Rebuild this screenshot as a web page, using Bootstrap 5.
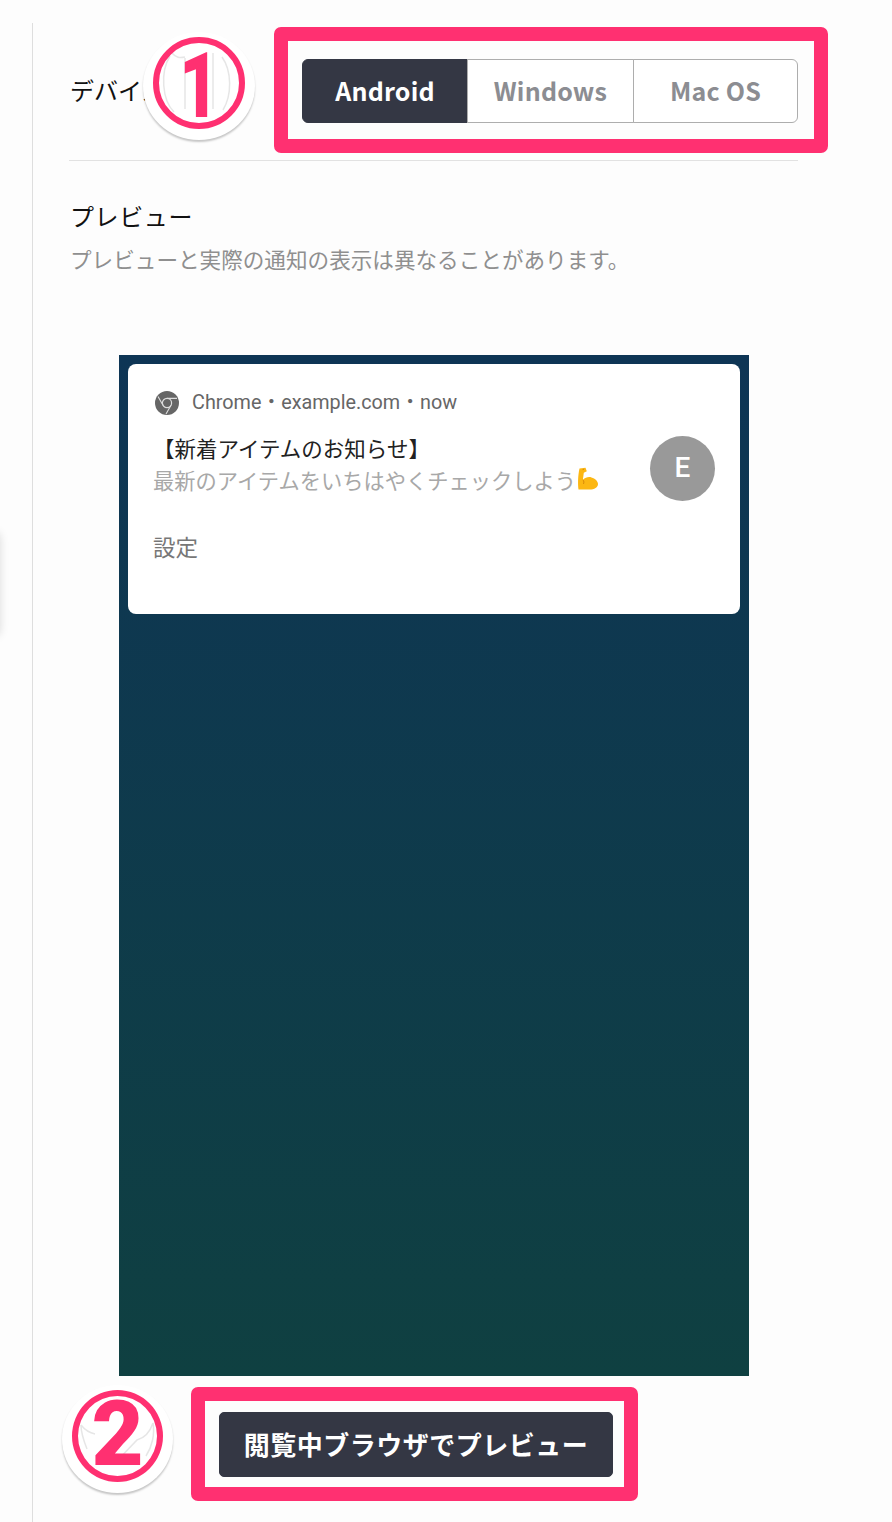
<!DOCTYPE html>
<html lang="ja">
<head>
<meta charset="utf-8">
<title>プレビュー</title>
<link rel="stylesheet" href="https://cdn.jsdelivr.net/npm/bootstrap@5.3.0/dist/css/bootstrap.min.css">
<style>
html,body{height:1522px;overflow:hidden;background:#fdfdfd;}
body{position:relative;font-family:"Noto Sans CJK JP","Liberation Sans",sans-serif;color:#111;}
.side-peek{position:absolute;left:-40px;top:532px;width:40px;height:104px;border-radius:6px;box-shadow:0 0 10px rgba(0,0,0,.14);background:#fff;}
.shell{margin:23px 0 0 32px;height:1499px;border-left:1px solid #dedede;padding-left:36px;width:766px;}
.device-row{height:138px;padding-top:36px;border-bottom:1px solid #e2e2e2;}
.field-name{font-size:24px;margin:19px 0 0 1px;line-height:1;}
.os-group{width:496px;height:64px;}
.os-group .btn{flex:none;width:166px;font-size:25px;font-weight:700;line-height:1;color:#8c8d92;border-color:#adadad;background:#fff;padding:0 0 2px;letter-spacing:.2px;display:flex;align-items:center;justify-content:center;}
.os-group .btn:nth-child(2){width:167px;}
.os-group .btn:nth-child(3){width:165px;}
.os-group .btn.on{background:#343744;border-color:#343744;color:#fff;}
.preview-title{font-size:24px;line-height:1;margin:43px 0 0 1px;letter-spacing:.6px;font-weight:400;}
.preview-note{font-size:21.6px;line-height:1;margin:20px 0 0 1px;color:#8f8f8f;}
.phone{margin:85.4px 0 0 50px;width:630px;height:1021px;padding:9px;background:linear-gradient(180deg,#0e3555,#0f4041);}
.note-card{height:250px;border-radius:8px;background:#fff;padding:27px 25px 0 25px;}
.note-head{font-family:Roboto,"Noto Sans CJK JP",sans-serif;font-size:19.8px;line-height:24px;color:#666;gap:13px;margin-left:2px;}
.note-body{margin-top:18px;}
.note-title{font-size:21.5px;line-height:29px;color:#222;}
.note-text{font-size:21.25px;line-height:29px;color:#a8a8a8;margin-top:3px;white-space:nowrap;}
.note-avatar{width:65px;height:65px;border-radius:50%;background:#999;color:#fff;font-family:Roboto,sans-serif;font-size:28px;font-weight:500;margin:3px 0 0 0;flex:none;}
.note-action{font-size:22.5px;line-height:1;color:#777;margin-top:34px;}
.pv-btn-row{margin:36px 0 0 150px;}
.pv-btn{width:394px;height:65px;background:#343744;border-color:#343744;color:#fff;font-size:26px;font-weight:700;letter-spacing:.5px;padding:0;border-radius:5px;line-height:1;}
.pv-btn:hover{background:#343744;color:#fff;}
.frame-mark{position:absolute;border:14px solid #ff3071;border-radius:7px;pointer-events:none;}
.frame-a{left:274px;top:27px;width:554px;height:126px;}
.frame-b{left:191px;top:1387px;width:447px;height:114px;}
.num-mark{position:absolute;border-radius:50%;background:#fff;box-shadow:0 2px 2px rgba(0,0,0,.22);width:112px;height:108px;}
.num-a{left:143px;top:32px;}
.num-b{left:62px;top:1385px;height:108px;width:111px;}
.num-ring{position:absolute;inset:5px 10px 11px 10px;border:6.5px solid #ff3071;border-radius:50%;}
.num-ghost{position:absolute;inset:0;width:100%;height:100%;}
.num-digit{position:absolute;inset:0;color:#ff3071;font-family:Roboto,sans-serif;font-weight:900;font-size:90px;line-height:1;}
.num-a .num-digit{padding:2px 0 0 0;}
.num-a .num-digit span{display:block;transform:scaleX(.76);}
.num-b .num-digit{padding:0 0 8px 0;}
</style>
</head>
<body>
<div class="side-peek"></div>
<main class="shell">
  <section class="device-row d-flex justify-content-between align-items-start">
    <div class="field-name">デバイス</div>
    <div class="btn-group os-group" role="group">
      <button type="button" class="btn on">Android</button>
      <button type="button" class="btn">Windows</button>
      <button type="button" class="btn">Mac OS</button>
    </div>
  </section>
  <h2 class="preview-title">プレビュー</h2>
  <p class="preview-note">プレビューと実際の通知の表示は異なることがあります。</p>
  <div class="phone">
    <article class="note-card">
      <div class="note-head d-flex align-items-center">
        <svg width="24" height="24" viewBox="0 0 24 24" aria-hidden="true"><circle cx="12" cy="12" r="12" fill="#666"/><circle cx="12" cy="12" r="4.6" fill="#666" stroke="#ddd" stroke-width="1.2"/><path d="M12 7.4H22M8 14.3 3 5.6M16 14.3 11 23" stroke="#ddd" stroke-width="1.1" fill="none"/></svg>
        <span>Chrome・example.com・now</span>
      </div>
      <div class="note-body d-flex justify-content-between align-items-start">
        <div>
          <div class="note-title">【新着アイテムのお知らせ】</div>
          <div class="note-text d-flex align-items-center">最新のアイテムをいちはやくチェックしよう<svg width="23" height="24" viewBox="0 0 23 24" aria-hidden="true"><path d="M3.5 1.5 9.5.8l1.3 3.5-3 1.5-.9 7c2.5-2.4 5.5-3.2 8.6-2.4 3.6.9 6.5 3.6 6.5 6.6 0 3.4-3.6 5.6-8.5 5.6H2.5C1.8 17 1.8 9 3.5 1.5Z" fill="#fcb713"/><path d="M6.9 12.8c1.2 1.4 1.2 3 .5 4.2M6.6 2.6l1.5-.4" stroke="#d98a09" stroke-width="1" fill="none"/></svg></div>
        </div>
        <div class="note-avatar d-flex align-items-center justify-content-center">E</div>
      </div>
      <div class="note-action">設定</div>
    </article>
  </div>
  <div class="pv-btn-row"><button type="button" class="btn pv-btn">閲覧中ブラウザでプレビュー</button></div>
</main>

<div class="frame-mark frame-a"></div>
<div class="frame-mark frame-b"></div>
<div class="num-mark num-a">
  <svg class="num-ghost" viewBox="0 0 112 108" aria-hidden="true"><g fill="none" stroke="#e6e6e6" stroke-width="1.5"><path d="M27 24C17 40 19 68 31 80M29 21c4 5 8 5 13 4M42 26v51M70 21v56M79 25c10 14 10 38 1 53"/></g></svg>
  <div class="num-ring"></div>
  <div class="num-digit d-flex align-items-center justify-content-center"><span>1</span></div>
</div>
<div class="num-mark num-b">
  <svg class="num-ghost" viewBox="0 0 111 108" aria-hidden="true"><g fill="none" stroke="#e6e6e6" stroke-width="1.5"><path d="M19 40c4 5 9 8 14 9M25 64c-4-10-6-18-6-24M91 38c-3 9-9 15-16 17L54 77M91 38c2 11-1 24-7 33"/></g></svg>
  <div class="num-ring"></div>
  <div class="num-digit d-flex align-items-center justify-content-center">2</div>
</div>
<script src="https://cdn.jsdelivr.net/npm/bootstrap@5.3.0/dist/js/bootstrap.bundle.min.js"></script>
</body>
</html>
